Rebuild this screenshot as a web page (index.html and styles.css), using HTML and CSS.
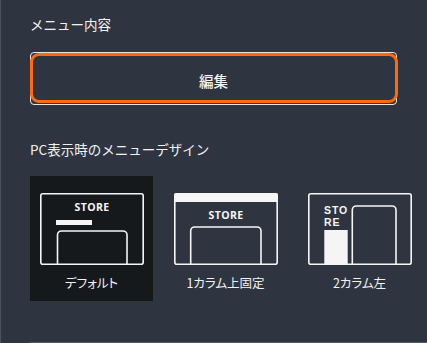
FILE: index.html
```html
<!DOCTYPE html>
<html lang="ja">
<head>
<meta charset="utf-8">
<link rel="stylesheet" href="styles.css">
</head>
<body>
<div class="panel">
  <h2 class="title">メニュー内容</h2>
  <button class="edit-btn" type="button">編集</button>
  <h2 class="title title-design">PC表示時のメニューデザイン</h2>
  <div class="cards">
    <div class="card selected">
      <svg class="icon" width="104" height="72" viewBox="0 0 104 72">
        <rect x="0.8" y="0.8" width="102.4" height="70.4" rx="2" fill="none" stroke="#f5f5f5" stroke-width="1.6"/>
        <text x="52" y="18.3" text-anchor="middle" class="store">STORE</text>
        <rect x="16" y="27" width="36" height="5" fill="#f5f5f5"/>
        <path d="M17.5 71 V42 a4 4 0 0 1 4 -4 H83 a4 4 0 0 1 4 4 V71" fill="none" stroke="#f5f5f5" stroke-width="1.6"/>
      </svg>
      <div class="label">デフォルト</div>
    </div>
    <div class="card">
      <svg class="icon" width="104" height="72" viewBox="0 0 104 72">
        <rect x="0.8" y="0.8" width="102.4" height="70.4" rx="2" fill="none" stroke="#f5f5f5" stroke-width="1.6"/>
        <path d="M0 9 V2 a2 2 0 0 1 2 -2 H102 a2 2 0 0 1 2 2 V9 Z" fill="#f5f5f5"/>
        <text x="52" y="26.3" text-anchor="middle" class="store">STORE</text>
        <path d="M16.7 71 V38 a4 4 0 0 1 4 -4 H83 a4 4 0 0 1 4 4 V71" fill="none" stroke="#f5f5f5" stroke-width="1.6"/>
      </svg>
      <div class="label">1カラム上固定</div>
    </div>
    <div class="card">
      <svg class="icon" width="104" height="72" viewBox="0 0 104 72">
        <rect x="0.8" y="0.8" width="102.4" height="70.4" rx="2" fill="none" stroke="#f5f5f5" stroke-width="1.6"/>
        <text x="16" y="20.5" class="store store-small">STO</text>
        <text x="16" y="33.3" class="store store-small">RE</text>
        <rect x="16.3" y="37" width="23.4" height="34" fill="#f5f5f5"/>
        <path d="M44.3 71 V17 a4 4 0 0 1 4 -4 H84 a4 4 0 0 1 4 4 V71" fill="none" stroke="#f5f5f5" stroke-width="1.6"/>
      </svg>
      <div class="label">2カラム左</div>
    </div>
  </div>
  <div class="bottom-line"></div>
</div>
</body>
</html>
```

FILE: styles.css
```css
html, body {
  margin: 0;
  padding: 0;
}
body {
  background: #2f3540;
  font-family: "Noto Sans CJK JP", "Noto Sans", sans-serif;
  color: #f2f2f2;
  width: 427px;
  height: 343px;
  overflow: hidden;
}
.panel {
  box-sizing: border-box;
  height: 343px;
  border-left: 1px solid #4a505a;
  padding-left: 29px;
  display: flex;
  flex-direction: column;
}
.title {
  margin: 14px 0 0 0;
  font-size: 13.5px;
  font-weight: normal;
  line-height: 20px;
  color: #f2f2f2;
}
.title-design {
  margin-top: 34px;
}
.edit-btn {
  position: relative;
  margin-top: 18px;
  width: 367px;
  height: 53px;
  box-sizing: border-box;
  border: 1px solid #e6e6e6;
  border-radius: 4px;
  background: #2f3540;
  color: #f2f2f2;
  font-family: "Noto Sans CJK JP", sans-serif;
  font-size: 14.5px;
  font-weight: 500;
  padding: 3px 0 0 0;
  cursor: pointer;
}
.edit-btn::after {
  content: "";
  position: absolute;
  left: -1.5px;
  right: -1.5px;
  top: 0px;
  bottom: 1px;
  border: 3px solid #ff6b0c;
  border-radius: 9px;
}
.cards {
  margin-top: 17px;
  display: flex;
  gap: 11px;
}
.card {
  width: 123px;
  height: 125px;
  box-sizing: border-box;
  padding-top: 17px;
  display: flex;
  flex-direction: column;
  align-items: center;
  flex-shrink: 0;
}
.card.selected {
  background: #16191c;
}
.icon {
  display: block;
  margin-left: 1px;
}
.store {
  font-family: "Open Sans", "DejaVu Sans", sans-serif;
  font-weight: 700;
  font-size: 10.5px;
  fill: #f5f5f5;
  letter-spacing: 0.4px;
}
.store-small {
  font-family: "Liberation Sans", Arial, sans-serif;
  font-size: 10.5px;
  letter-spacing: 0.9px;
}
.label {
  margin-top: 9px;
  font-size: 12.5px;
  line-height: 18px;
  font-feature-settings: "palt";
  color: #f2f2f2;
}
.bottom-line {
  margin-top: auto;
  height: 1px;
  background: #555c66;
}
```
